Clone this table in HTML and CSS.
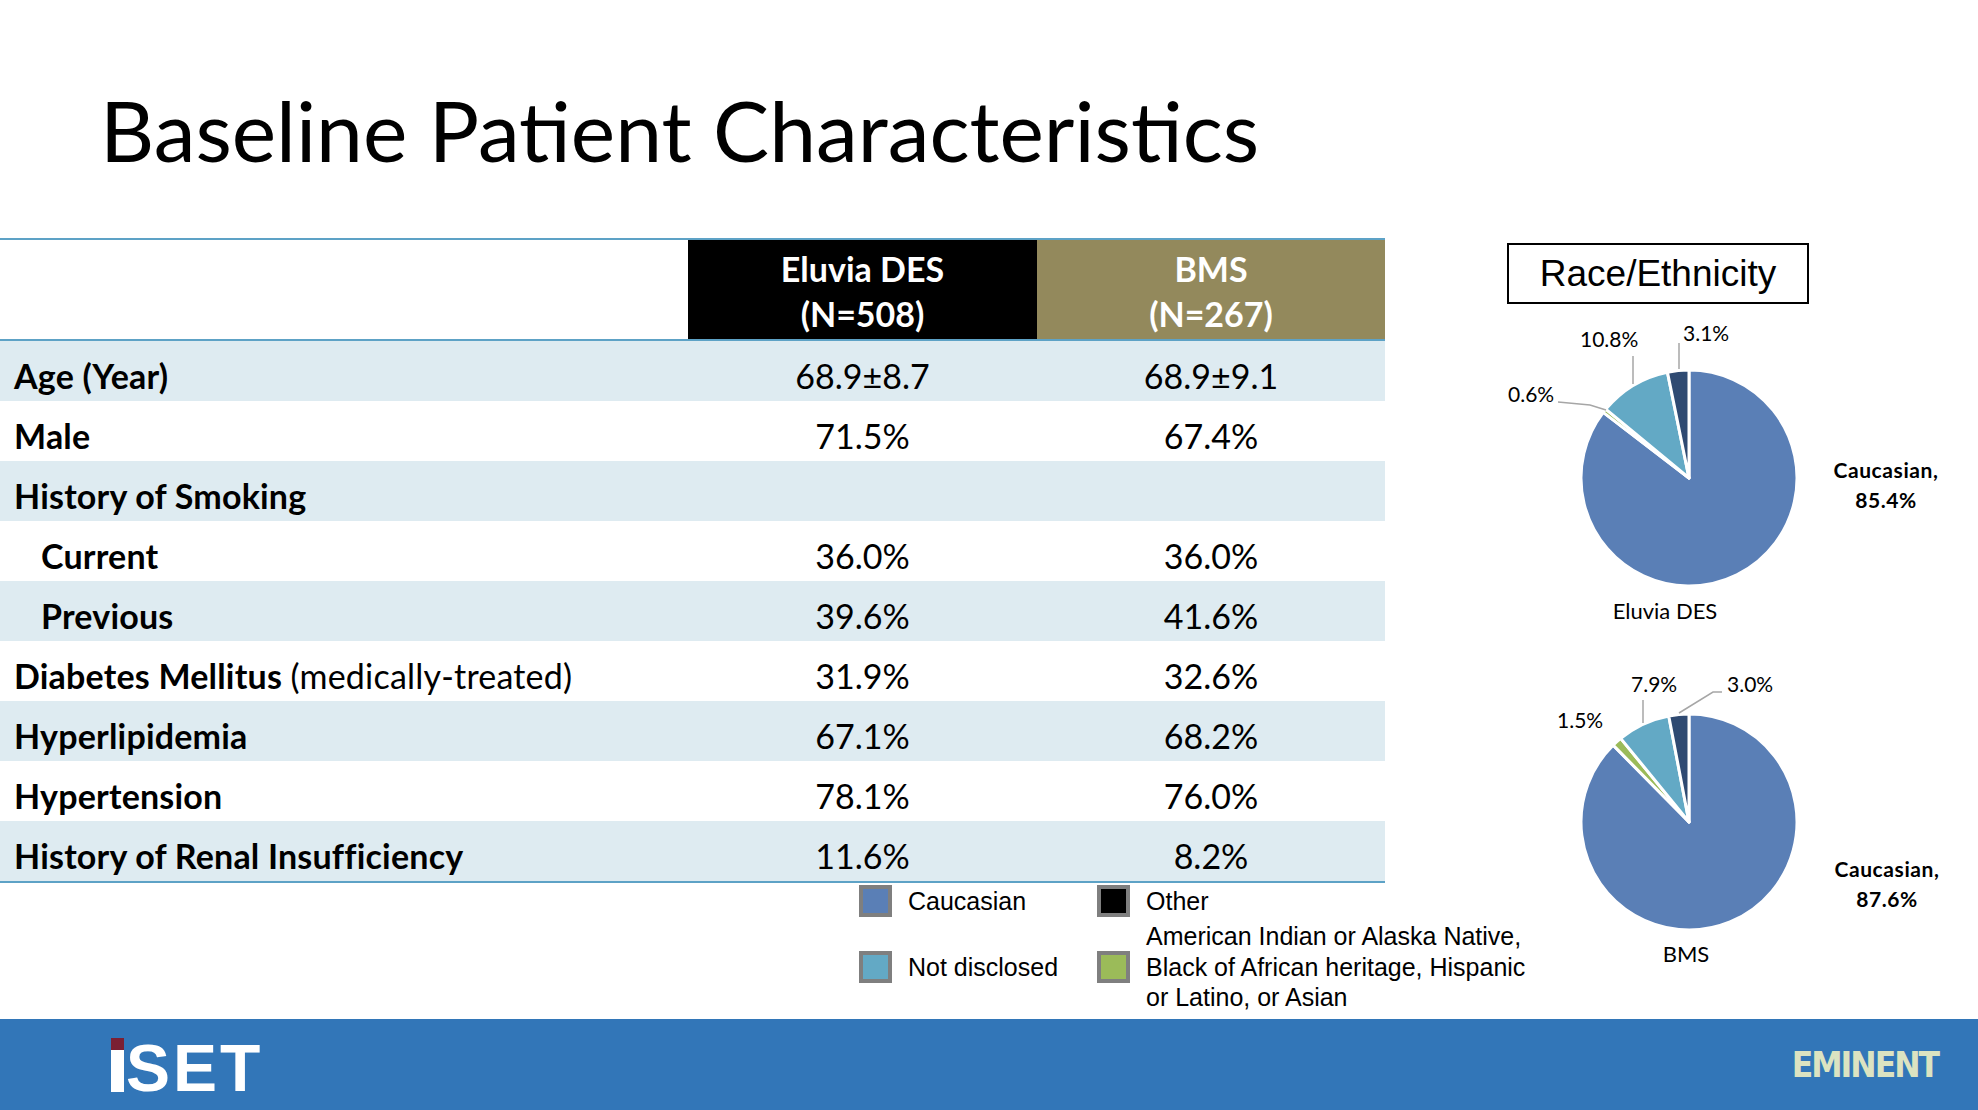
FILE: index.html
```html
<!DOCTYPE html>
<html lang="en">
<head>
<meta charset="utf-8">
<title>Baseline Patient Characteristics</title>
<link rel="stylesheet" href="styles.css">
</head>
<body>
<div class="slide">
  <header class="title-bar">
    <h1>Baseline Patient Characteristics</h1>
  </header>

  <main class="content">
    <section class="left">
      <div class="table">
        <div class="thead">
          <div class="th th-blank"></div>
          <div class="th th-eluvia"><span>Eluvia DES</span><span>(N=508)</span></div>
          <div class="th th-bms"><span>BMS</span><span>(N=267)</span></div>
        </div>
        <div class="tbody">
          <div class="tr"><div class="label">Age (Year)</div><div class="val">68.9±8.7</div><div class="val">68.9±9.1</div></div>
          <div class="tr"><div class="label">Male</div><div class="val">71.5%</div><div class="val">67.4%</div></div>
          <div class="tr"><div class="label">History of Smoking</div><div class="val"></div><div class="val"></div></div>
          <div class="tr"><div class="label indent">Current</div><div class="val">36.0%</div><div class="val">36.0%</div></div>
          <div class="tr"><div class="label indent">Previous</div><div class="val">39.6%</div><div class="val">41.6%</div></div>
          <div class="tr"><div class="label">Diabetes Mellitus <span class="note">(medically-treated)</span></div><div class="val">31.9%</div><div class="val">32.6%</div></div>
          <div class="tr"><div class="label">Hyperlipidemia</div><div class="val">67.1%</div><div class="val">68.2%</div></div>
          <div class="tr"><div class="label">Hypertension</div><div class="val">78.1%</div><div class="val">76.0%</div></div>
          <div class="tr"><div class="label">History of Renal Insufficiency</div><div class="val">11.6%</div><div class="val">8.2%</div></div>
        </div>
      </div>

      <div class="legend">
        <div class="lg-item"><span class="sw sw-cau"></span><span>Caucasian</span></div>
        <div class="lg-item"><span class="sw sw-oth"></span><span>Other</span></div>
        <div class="lg-item"><span class="sw sw-nd"></span><span>Not disclosed</span></div>
        <div class="lg-item"><span class="sw sw-ami"></span><span>American Indian or Alaska Native,<br>Black of African heritage, Hispanic<br>or Latino, or Asian</span></div>
      </div>
    </section>

    <aside class="charts">
      <div class="chart-title">Race/Ethnicity</div>

      <svg class="pie pie1" viewBox="0 0 593 320" xmlns="http://www.w3.org/2000/svg">
        <g class="slices">
          <path class="s-cau" d="M304,168 L304,60 A108,108 0 1 1 218.24,102.36 Z"/>
          <path class="s-ami" d="M304,168 L218.24,102.36 A108,108 0 0 1 220.79,99.16 Z"/>
          <path class="s-nd" d="M304,168 L220.79,99.16 A108,108 0 0 1 282.43,62.17 Z"/>
          <path class="s-oth" d="M304,168 L282.43,62.17 A108,108 0 0 1 304,60 Z"/>
        </g>
        <polyline class="leader" points="173,92 205,95 221,100"/>
        <line class="leader" x1="248" y1="46" x2="248" y2="74"/>
        <line class="leader" x1="294" y1="33" x2="294" y2="59"/>
        <text class="lbl" x="195" y="37">10.8%</text>
        <text class="lbl" x="298" y="31">3.1%</text>
        <text class="lbl" x="123" y="92">0.6%</text>
        <text class="lbl lbl-b" x="501" y="168" text-anchor="middle">Caucasian,</text>
        <text class="lbl lbl-b" x="501" y="198" text-anchor="middle">85.4%</text>
        <text class="lbl chart-name" x="280" y="309" text-anchor="middle">Eluvia DES</text>
      </svg>

      <svg class="pie pie2" viewBox="0 0 593 340" xmlns="http://www.w3.org/2000/svg">
        <g class="slices">
          <path class="s-cau" d="M304,182 L304,74 A108,108 0 1 1 228.12,105.15 Z"/>
          <path class="s-ami" d="M304,182 L228.12,105.15 A108,108 0 0 1 235.69,98.34 Z"/>
          <path class="s-nd" d="M304,182 L235.69,98.34 A108,108 0 0 1 283.76,75.91 Z"/>
          <path class="s-oth" d="M304,182 L283.76,75.91 A108,108 0 0 1 304,74 Z"/>
        </g>
        <line class="leader" x1="258" y1="60" x2="258" y2="83"/>
        <polyline class="leader" points="337,52 328,52 294,73"/>
        <text class="lbl" x="246" y="52">7.9%</text>
        <text class="lbl" x="342" y="52">3.0%</text>
        <text class="lbl" x="172" y="88">1.5%</text>
        <text class="lbl lbl-b" x="502" y="237" text-anchor="middle">Caucasian,</text>
        <text class="lbl lbl-b" x="502" y="267" text-anchor="middle">87.6%</text>
        <text class="lbl chart-name" x="301" y="322" text-anchor="middle">BMS</text>
      </svg>
    </aside>
  </main>

  <footer class="footer">
    <div class="iset"><span class="iset-i"></span><span class="iset-text">SET</span></div>
    <div class="eminent">EMINENT</div>
  </footer>
</div>
</body>
</html>
```

FILE: styles.css
```css
* { box-sizing: border-box; }

body {
  margin: 0;
  background: #fff;
}

.slide {
  width: 1978px;
  height: 1110px;
  display: flex;
  flex-direction: column;
  overflow: hidden;
  background: #fff;
  color: #000;
  font-family: Lato, "Noto Sans", sans-serif;
}

/* Title */
.title-bar {
  flex: none;
  height: 238px;
  padding: 80px 0 0 100px;
}
.title-bar h1 {
  margin: 0;
  font-weight: 400;
  font-size: 84px;
  line-height: 1.2;
  white-space: nowrap;
}

/* Main */
.content {
  flex: 1;
  display: flex;
  min-height: 0;
}
.left {
  flex: none;
  width: 1385px;
}

/* Table */
.table {
  border-top: 2px solid #5DA2C6;
  border-bottom: 2px solid #5DA2C6;
}
.thead,
.tr {
  display: grid;
  grid-template-columns: 688px 349px 348px;
}
.thead {
  height: 101px;
  border-bottom: 2px solid #5DA2C6;
}
.th {
  display: flex;
  flex-direction: column;
  justify-content: center;
  align-items: center;
  padding-top: 2px;
  color: #fff;
  font-weight: 700;
  font-size: 34px;
  line-height: 45px;
}
.th-blank { background: #fff; }
.th-eluvia { background: #000; }
.th-bms { background: #93895C; }

.tr {
  height: 60px;
  padding-top: 10px;
  font-size: 34px;
  line-height: 50px;
}
.tbody .tr:nth-child(odd) { background: #DEEBF1; }
.label {
  font-weight: 700;
  padding-left: 14px;
  white-space: nowrap;
  letter-spacing: 0.2px;
}
.label.indent { padding-left: 41px; }
.label .note { font-weight: 400; }
.val { text-align: center; }

/* Legend */
.legend {
  width: max-content;
  display: grid;
  grid-template-columns: 238px auto;
  row-gap: 4px;
  margin-top: 2px;
  padding-left: 859px;
  font-family: "Liberation Sans", Arial, sans-serif;
  font-size: 25px;
  line-height: 30.5px;
  white-space: nowrap;
}
.lg-item {
  display: flex;
  align-items: center;
  gap: 16px;
}
.sw {
  flex: none;
  width: 33px;
  height: 32px;
  border: 4px solid #7F7F7F;
}
.sw-cau { background: #5A7FB6; }
.sw-oth { background: #000; }
.sw-nd { background: #63A9C5; }
.sw-ami { background: #9BBB59; }

/* Charts */
.charts {
  flex: 1;
  display: flex;
  flex-direction: column;
}
.chart-title {
  margin: 5px 0 0 122px;
  width: 302px;
  height: 61px;
  border: 2px solid #000;
  display: flex;
  align-items: center;
  justify-content: center;
  font-family: "Liberation Sans", Arial, sans-serif;
  font-size: 37px;
}
.pie {
  display: block;
  width: 593px;
  overflow: visible;
}
.pie1 { height: 320px; margin-top: 6px; }
.pie2 { height: 340px; margin-top: 10px; }

.slices path {
  stroke: #fff;
  stroke-width: 3;
  stroke-linejoin: round;
}
.s-cau { fill: #5A7FB6; }
.s-ami { fill: #9BBB59; }
.s-nd { fill: #63A9C5; }
.s-oth { fill: #2F4A72; }

.leader {
  fill: none;
  stroke: #A6A6A6;
  stroke-width: 1.5;
}
.lbl {
  font-family: Lato, "Noto Sans", sans-serif;
  font-size: 21px;
  fill: #000;
}
.lbl-b {
  font-weight: 700;
  letter-spacing: 0.6px;
}
.chart-name { font-size: 22px; }

/* Footer */
.footer {
  flex: none;
  height: 91px;
  background: #3276B8;
  display: flex;
  align-items: center;
  justify-content: space-between;
  padding: 0 40px 0 111px;
}
.iset {
  display: flex;
  align-items: flex-end;
  gap: 2px;
  margin-top: 1px;
}
.iset-i {
  width: 13px;
  height: 54px;
  display: flex;
  flex-direction: column;
}
.iset-i::before {
  content: "";
  height: 12px;
  background: #7B1F33;
}
.iset-i::after {
  content: "";
  flex: 1;
  background: #fff;
}
.iset-text {
  font-family: "Liberation Sans", Arial, sans-serif;
  font-weight: 700;
  font-size: 66px;
  line-height: 47px;
  letter-spacing: 3px;
  color: #fff;
}
.eminent {
  font-family: "DejaVu Sans Condensed", "DejaVu Sans", sans-serif;
  font-stretch: condensed;
  font-weight: 700;
  font-size: 35px;
  letter-spacing: -2px;
  color: #DCE3C1;
}
```
